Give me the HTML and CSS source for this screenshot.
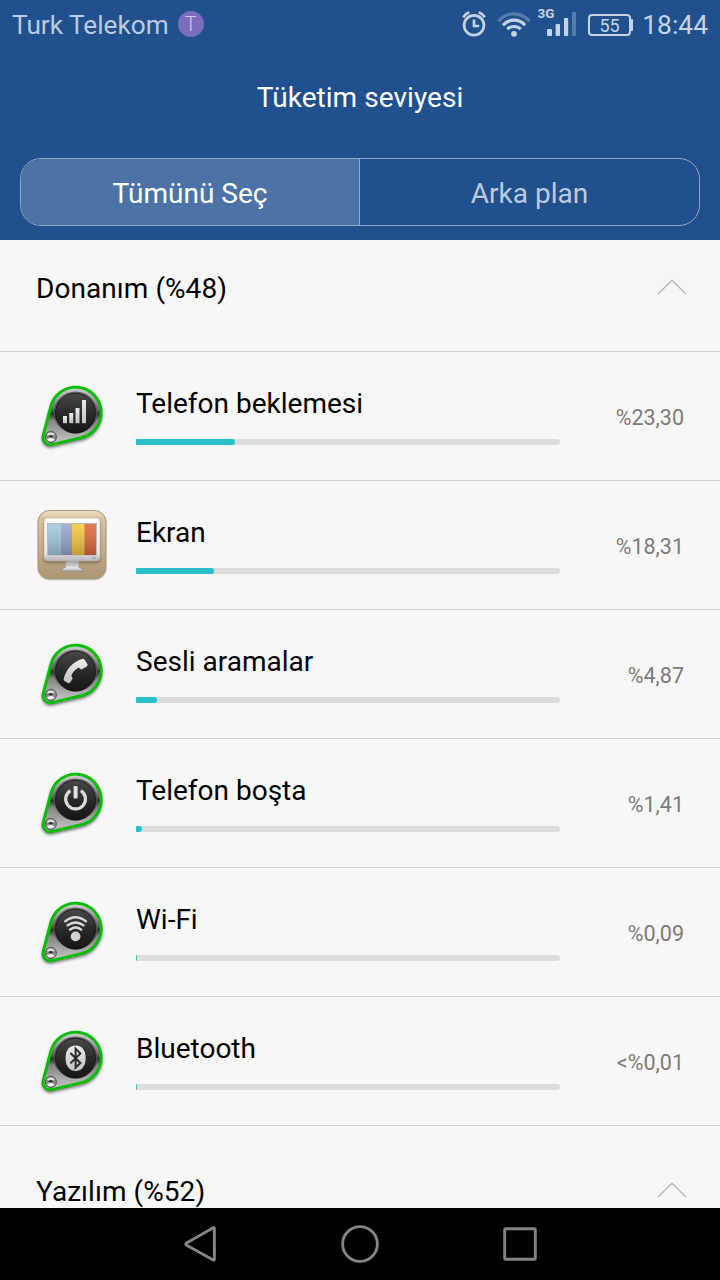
FILE: index.html
```
<!DOCTYPE html>
<html lang="tr">
<head>
  <meta charset="UTF-8">
  <meta name="viewport" content="width=device-width,initial-scale=1.0">
  <title>Tüketim seviyesi</title>
  <link rel="stylesheet" href="styles.css">
</head>
<body>

<!-- Shared icon parts -->
<svg class="defs" width="0" height="0">
  <defs>
    <linearGradient id="metal" x1="0" y1="0" x2="0" y2="1">
      <stop offset="0" stop-color="#cfcfcf"/>
      <stop offset=".2" stop-color="#a4a4a4"/>
      <stop offset=".4" stop-color="#606060"/>
      <stop offset=".46" stop-color="#2c2c2c"/>
      <stop offset=".58" stop-color="#858585"/>
      <stop offset="1" stop-color="#cacaca"/>
    </linearGradient>
    <linearGradient id="ring" x1="0" y1="0" x2="0" y2="1">
      <stop offset="0" stop-color="#666"/>
      <stop offset=".6" stop-color="#4a4a4a"/>
      <stop offset="1" stop-color="#b5b5b5"/>
    </linearGradient>
    <linearGradient id="disc" x1="0" y1="0" x2="0" y2="1">
      <stop offset="0" stop-color="#484848"/>
      <stop offset=".6" stop-color="#252525"/>
      <stop offset="1" stop-color="#151515"/>
    </linearGradient>
    <linearGradient id="glyph" x1="0" y1="0" x2="0" y2="1">
      <stop offset="0" stop-color="#ececec"/>
      <stop offset="1" stop-color="#c2c2c2"/>
    </linearGradient>
    <linearGradient id="tan" x1="0" y1="0" x2="0" y2="1">
      <stop offset="0" stop-color="#f0dfc2"/>
      <stop offset=".12" stop-color="#d9c4a0"/>
      <stop offset="1" stop-color="#ab9572"/>
    </linearGradient>
    <linearGradient id="frame" x1="0" y1="0" x2="0" y2="1">
      <stop offset="0" stop-color="#fff"/>
      <stop offset=".8" stop-color="#e4e4ea"/>
      <stop offset="1" stop-color="#b4b4b8"/>
    </linearGradient>
    <linearGradient id="stand" x1="0" y1="0" x2="0" y2="1">
      <stop offset="0" stop-color="#8c8c90"/>
      <stop offset=".5" stop-color="#c6c6ca"/>
      <stop offset=".75" stop-color="#e8e8ec"/>
      <stop offset="1" stop-color="#a5a5a8"/>
    </linearGradient>
    <linearGradient id="shade" x1="0" y1="0" x2="0" y2="1">
      <stop offset="0" stop-color="#fff" stop-opacity=".12"/>
      <stop offset="1" stop-color="#000" stop-opacity=".22"/>
    </linearGradient>
    <filter id="soft" x="-20%" y="-20%" width="140%" height="140%">
      <feGaussianBlur stdDeviation="1.5"/>
    </filter>
    <g id="badge">
      <path d="M14.9 26.1A25.6 25.6 0 1 1 45.2 57.7L15.6 64.6A7.3 7.3 0 0 1 7.2 55.6Z" transform="translate(0 2.2)" fill="#000" stroke="#000" stroke-width="2" opacity=".5" filter="url(#soft)"/>
      <path d="M14.9 26.1A25.6 25.6 0 1 1 45.2 57.7L15.6 64.6A7.3 7.3 0 0 1 7.2 55.6Z" fill="url(#metal)" stroke="#00be00" stroke-width="2.9"/>
      <circle cx="39.5" cy="33.2" r="21.8" fill="url(#ring)"/>
      <circle cx="39.5" cy="33.2" r="20" fill="url(#disc)" stroke="#111" stroke-width=".8"/>
      <circle cx="14.8" cy="57" r="5.6" fill="#8a8a8a" stroke="#444" stroke-width=".8"/>
      <path d="M10.6 54.8a5 5 0 0 1 8.4 0l-4.2 1.2z" fill="#ddd"/>
      <path d="M10.8 59.4a4.8 4.8 0 0 0 8 0l-4-2z" fill="#f2f2f2"/>
      <ellipse cx="14.8" cy="56.2" rx="2" ry="1.3" fill="#333"/>
    </g>
  </defs>
</svg>

<header class="header">
  <div class="status">
    <span class="carrier">Turk Telekom</span>
    <span class="tag">T</span>
    <div class="status-icons">
      <svg class="alarm" width="24" height="48" viewBox="0 0 24 48">
        <circle cx="12" cy="25.3" r="9.9"/>
        <path d="M12 19.6V26h5.2"/>
        <path d="M1.2 17.2Q3.4 13.6 7.2 12.2M22.8 17.2Q20.6 13.6 16.8 12.2"/>
      </svg>
      <svg class="wifi" width="34" height="48" viewBox="0 0 34 48">
        <path class="dim" d="M1.4 21.1Q8 13.8 17 13.8T32.6 21.1"/>
        <path d="M6 25.2Q10.5 20.2 17 20.2T28 25.2"/>
        <path d="M10.2 29.2Q13 26.5 17 26.5T23.8 29.2"/>
        <circle cx="17" cy="33.8" r="2.9"/>
      </svg>
      <svg class="signal" width="38" height="48" viewBox="0 0 38 48">
        <text x="-.6" y="18">3G</text>
        <rect x="9" y="29" width="5" height="7" rx="1"/>
        <rect x="17.6" y="24" width="4.4" height="12" rx="1"/>
        <rect x="26" y="18" width="4.2" height="18" rx="1"/>
        <rect class="dim" x="34" y="12" width="4" height="24" rx="1"/>
      </svg>
      <span class="battery">55</span>
      <span class="clock">18:44</span>
    </div>
  </div>
  <h1>Tüketim seviyesi</h1>
  <div class="tabs">
    <div class="tab active">Tümünü Seç</div>
    <div class="tab">Arka plan</div>
  </div>
</header>

<main class="list">
  <div class="section">
    <h2>Donanım (%48)</h2>
    <div class="toggle"><svg width="30" height="16" viewBox="0 0 30 16"><path d="M1 15L15 1.2L29 15"/></svg></div>
  </div>

  <div class="row">
    <svg class="icon" viewBox="0 0 72 72">
      <use href="#badge"/>
      <g fill="url(#glyph)">
        <rect x="27" y="36" width="4" height="7.2"/>
        <rect x="33.2" y="33" width="4" height="10.2"/>
        <rect x="39.5" y="28" width="4" height="15.2"/>
        <rect x="46" y="20" width="4" height="23.2"/>
      </g>
    </svg>
    <div class="info"><div class="name">Telefon beklemesi</div><div class="bar"><div class="fill" style="width:23.3%"></div></div></div>
    <div class="value">%23,30</div>
  </div>

  <div class="row">
    <svg class="icon" viewBox="0 0 72 72">
      <rect x="1.5" y="1.5" width="69" height="70" rx="12" fill="#000" opacity=".15"/>
      <rect x="2" y="1.5" width="68" height="68.5" rx="11.5" fill="url(#tan)" stroke="#a89a82"/>
      <rect x="8" y="11" width="56" height="43" rx="3" fill="#000" opacity=".3" filter="url(#soft)"/>
      <path d="M29.5 50h13.5v8.5l3.5 1.5v2.2H26V60l3.5-1.5z" fill="url(#stand)" stroke="#8d8780" stroke-width=".6"/>
      <rect x="8" y="9" width="56" height="43" rx="3.5" fill="url(#frame)" stroke="#b5aa98" stroke-width=".5"/>
      <rect x="11" y="14" width="50" height="32.5" fill="#b9bbc0"/>
      <rect x="12" y="15" width="13" height="31" fill="#a5cade"/>
      <rect x="25" y="15" width="11" height="31" fill="#98a5cf"/>
      <rect x="36" y="15" width="12.5" height="31" fill="#f5c83f"/>
      <rect x="48.5" y="15" width="11.5" height="31" fill="#e0693b"/>
      <rect x="12" y="15" width="48" height="31" fill="url(#shade)"/>
      <rect x="56" y="48" width="4" height="2" rx="1" fill="#a8a8ac"/>
    </svg>
    <div class="info"><div class="name">Ekran</div><div class="bar"><div class="fill" style="width:18.31%"></div></div></div>
    <div class="value">%18,31</div>
  </div>

  <div class="row">
    <svg class="icon" viewBox="0 0 72 72">
      <use href="#badge"/>
      <path d="M45.2 21.2Q47.2 20 48.8 22L51.6 26.2Q52 28 50 29L45.6 31.4Q44 31.6 43 29.6C39 31.5 36 34.8 35.4 38.4Q37.2 39.6 36.4 41L34 44.6Q33 45.6 31.4 44.8L28 42.4Q27.2 41.2 28.2 39C30.4 31.4 36.8 24 45.2 21.2Z" fill="url(#glyph)"/>
    </svg>
    <div class="info"><div class="name">Sesli aramalar</div><div class="bar"><div class="fill" style="width:4.87%"></div></div></div>
    <div class="value">%4,87</div>
  </div>

  <div class="row">
    <svg class="icon" viewBox="0 0 72 72">
      <use href="#badge"/>
      <path d="M34.4 23.6A9.9 9.9 0 1 0 44.8 23.6" fill="none" stroke="#dadada" stroke-width="3.2"/>
      <rect x="37.6" y="19" width="4" height="12.4" rx="1.2" fill="#e2e2e2"/>
    </svg>
    <div class="info"><div class="name">Telefon boşta</div><div class="bar"><div class="fill" style="width:1.41%"></div></div></div>
    <div class="value">%1,41</div>
  </div>

  <div class="row">
    <svg class="icon" viewBox="0 0 72 72">
      <use href="#badge"/>
      <g fill="none" stroke="#dadada" stroke-width="2.4" stroke-linecap="round">
        <path d="M29.3 25.2Q39.5 17.2 49.9 25.2"/>
        <path d="M31.6 29.4Q39.5 23.4 47.6 29.4"/>
        <path d="M34 33.6Q39.5 29.4 45.2 33.6"/>
      </g>
      <circle cx="39.6" cy="40.4" r="4.9" fill="#d2d2d2"/>
    </svg>
    <div class="info"><div class="name">Wi-Fi</div><div class="bar"><div class="fill" style="width:0.09%"></div></div></div>
    <div class="value">%0,09</div>
  </div>

  <div class="row">
    <svg class="icon" viewBox="0 0 72 72">
      <use href="#badge"/>
      <rect x="29.6" y="20.4" width="20" height="25.6" rx="9.8" ry="11" fill="url(#glyph)"/>
      <path d="M34.4 28L44.4 38L39.6 42.6V23.6L44.4 28.4L34.4 38.4" fill="none" stroke="#2c2c2c" stroke-width="2"/>
    </svg>
    <div class="info"><div class="name">Bluetooth</div><div class="bar"><div class="fill" style="width:0.01%"></div></div></div>
    <div class="value">&lt;%0,01</div>
  </div>

  <div class="section next">
    <h2>Yazılım (%52)</h2>
    <div class="toggle"><svg width="30" height="16" viewBox="0 0 30 16"><path d="M1 15L15 1.2L29 15"/></svg></div>
  </div>
</main>

<nav class="navbar">
  <svg width="40" height="40" viewBox="0 0 40 40"><path d="M34.4 4.4v31a.8.8 0 0 1-1.2.7L6.2 20.9a1 1 0 0 1 0-1.7L33.2 3.7a.8.8 0 0 1 1.2.7z"/></svg>
  <svg width="40" height="40" viewBox="0 0 40 40"><circle cx="20" cy="20" r="17.4"/></svg>
  <svg width="40" height="40" viewBox="0 0 40 40"><rect x="4.7" y="4.7" width="30.6" height="30.6" rx="1.2"/></svg>
</nav>

</body>
</html>
```
FILE: styles.css
```
* { box-sizing:border-box; }
body { font-family: Roboto, sans-serif; margin:0; height:1280px; overflow:hidden;
  display:flex; flex-direction:column; background:#f7f7f7; color:#000; }
.defs { position:absolute; }
h1, h2 { margin:0; font-weight:400; font-size:28px; }

/* Header */
.header { background:#20508d; height:240px; flex:none; }
.status { height:48px; padding:0 12px; display:flex; align-items:center; color:#bccbdf; }
.carrier { font-size:26.2px; line-height:48px; padding-top:1px; }
.tag { width:26px; height:26px; margin-left:9px; border-radius:50%; background:#7c6cbe;
  color:#cdcbea; font-size:20px; font-weight:300; line-height:26px; text-align:center; }
.status-icons { margin-left:auto; display:flex; align-items:center; }
.status-icons svg { fill:none; stroke:#c7d3e3; display:block; }
.alarm { stroke-width:2.7; margin-right:11px; }
.wifi { stroke-width:3.2; margin-right:7px; }
.wifi circle { fill:#c7d3e3; stroke:none; }
.wifi .dim { stroke:#587bab; }
.status-icons .signal { fill:#c7d3e3; stroke:none; margin-right:12px; overflow:visible; }
.signal .dim { fill:#587bab; }
.signal text { font-size:13.5px; font-weight:700; }
.battery { position:relative; width:43px; height:22px; margin:2px 11px 0 0; border:2px solid #c7d3e3;
  border-radius:4px; font-size:18px; line-height:19px; text-align:center; color:#c7d3e3; }
.battery::after { content:""; position:absolute; right:-4px; top:3px; width:2px; height:12px;
  background:#c7d3e3; border-radius:0 1px 1px 0; }
.clock { width:66px; font-size:26.4px; line-height:48px; padding-top:2px; text-align:right; color:#c7d3e3; }
h1 { height:110px; line-height:100px; text-align:center; color:#fff; letter-spacing:.05px; }

.tabs { display:flex; height:68px; margin:0 20px; border:1px solid #90a8c6; border-radius:21px; overflow:hidden; }
.tab { flex:1; font-size:28px; line-height:70px; text-align:center; color:#bccbdf; }
.tab.active { flex:0 0 339px; background:#4d73a6; color:#fff; border-right:1px solid #90a8c6; }

/* List */
.list { flex:1; min-height:0; overflow:hidden; }
.section { height:112px; padding:16px 16px 0 36px; display:flex; justify-content:space-between;
  border-bottom:1px solid #cfcfcf; }
.section h2 { line-height:66px; letter-spacing:.06px; }
.section.next { margin-top:17px; }
.toggle { width:64px; height:64px; display:flex; align-items:center; justify-content:center; padding-bottom:2px; background:#f6f6f6; }
.toggle svg { fill:none; stroke:#b4b4b4; stroke-width:1.3; }

.row { height:129px; padding:0 36px; display:flex; align-items:center; border-bottom:1px solid #cfcfcf; }
.icon { width:72px; height:72px; margin-right:28px; flex:none; }
.info { width:424px; height:62px; flex:none; }
.name { font-size:28px; line-height:38px; }
.bar { height:6px; margin-top:16px; background:#dcdcdc; border-radius:1px 3px 3px 1px; overflow:hidden; }
.fill { height:6px; min-width:1px; background:#2ac0cb; border-radius:0 3px 3px 0; }
.value { flex:1; padding-top:2px; font-size:21.5px; text-align:right; color:#7b7b7b; }

/* Navigation bar */
.navbar { height:72px; flex:none; background:#000; display:flex; justify-content:center; align-items:center; gap:120px; }
.navbar svg { fill:none; stroke:#848484; stroke-width:2.9; }
```
